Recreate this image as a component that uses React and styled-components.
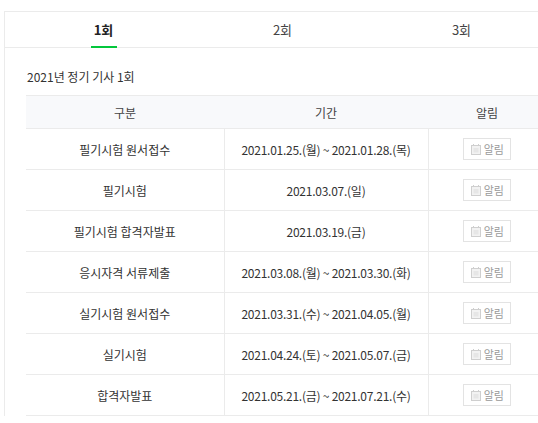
import React from "react";
import styled, { createGlobalStyle } from "styled-components";

const Global = createGlobalStyle`
  html, body { margin: 0; padding: 0; overflow: hidden; background: #fff; }
  body { font-family: "Noto Sans CJK KR", "Noto Sans", sans-serif; color: #333; }
`;

const Page = styled.div`
  width: 100%;
  overflow: hidden;
`;

const Panel = styled.div`
  margin: 11px 0 0 4px;
  width: 580px;
  border-top: 1px solid #ebebeb;
  border-left: 1px solid #ebebeb;
`;

const TabList = styled.ul`
  list-style: none;
  margin: 0;
  padding: 0 0 0 9px;
  display: flex;
  border-bottom: 1px solid #ebebeb;
`;

const Tab = styled.li`
  position: relative;
  width: 179px;
  height: 35px;
  display: flex;
  align-items: center;
  justify-content: center;
  font-size: 13px;
  font-weight: ${(p) => (p.$active ? 700 : 400)};
  color: ${(p) => (p.$active ? "#222" : "#444")};
`;

const Indicator = styled.span`
  position: absolute;
  left: 50%;
  bottom: -1px;
  width: 26px;
  height: 2px;
  margin-left: -13px;
  background: #03c73c;
`;

const Body = styled.div`
  padding: 20px 0 0 21px;
`;

const Title = styled.h3`
  margin: 0 0 9px 1px;
  font-size: 12px;
  font-weight: 400;
  line-height: 18px;
  color: #333;
`;

const Table = styled.table`
  border-collapse: collapse;
  table-layout: fixed;
  width: 520px;
  font-size: 12px;
`;

const Th = styled.th`
  height: 32px;
  padding: 0;
  background: #f8f9fb;
  border-top: 1px solid #ebebeb;
  border-bottom: 1px solid #ebebeb;
  font-weight: 400;
  color: #444;
  text-align: center;
`;

const Td = styled.td`
  height: 40px;
  padding: 0;
  border-bottom: 1px solid #ebebeb;
  border-left: ${(p) => (p.$first ? "none" : "1px solid #ebebeb")};
  text-align: center;
  color: #333;
  white-space: nowrap;
  letter-spacing: ${(p) => (p.$tight ? "-0.25px" : "0")};
`;

const AlarmButton = styled.button`
  display: inline-flex;
  align-items: center;
  justify-content: center;
  gap: 3px;
  width: 48px;
  height: 22px;
  padding: 0;
  border: 1px solid #e3e3e3;
  background: #fff;
  font-family: inherit;
  font-size: 11px;
  color: #9a9a9a;
  vertical-align: middle;
`;

const CalIcon = () => (
  <svg width="10" height="11" viewBox="0 0 10 11">
    <rect x="0.5" y="1.5" width="9" height="9" fill="#f2f2f2" stroke="#cfcfcf" />
    <rect x="2.5" y="4" width="5" height="4.5" fill="#e6e6e6" />
    <rect x="2" y="0" width="1" height="2" fill="#cfcfcf" />
    <rect x="7" y="0" width="1" height="2" fill="#cfcfcf" />
  </svg>
);

const rows = [
  ["필기시험 원서접수", "2021.01.25.(월) ~ 2021.01.28.(목)"],
  ["필기시험", "2021.03.07.(일)"],
  ["필기시험 합격자발표", "2021.03.19.(금)"],
  ["응시자격 서류제출", "2021.03.08.(월) ~ 2021.03.30.(화)"],
  ["실기시험 원서접수", "2021.03.31.(수) ~ 2021.04.05.(월)"],
  ["실기시험", "2021.04.24.(토) ~ 2021.05.07.(금)"],
  ["합격자발표", "2021.05.21.(금) ~ 2021.07.21.(수)"],
];

export default function App() {
  return (
    <>
      <Global />
      <Page>
        <Panel>
          <TabList>
            <Tab $active>
              1회
              <Indicator />
            </Tab>
            <Tab>2회</Tab>
            <Tab>3회</Tab>
          </TabList>
          <Body>
            <Title>2021년 정기 기사 1회</Title>
            <Table>
              <colgroup>
                <col style={{ width: 198 }} />
                <col style={{ width: 204 }} />
                <col style={{ width: 118 }} />
              </colgroup>
              <thead>
                <tr>
                  <Th>구분</Th>
                  <Th>기간</Th>
                  <Th>알림</Th>
                </tr>
              </thead>
              <tbody>
                {rows.map(([name, date]) => (
                  <tr key={name}>
                    <Td $first>{name}</Td>
                    <Td $tight>{date}</Td>
                    <Td>
                      <AlarmButton>
                        <CalIcon />
                        알림
                      </AlarmButton>
                    </Td>
                  </tr>
                ))}
              </tbody>
            </Table>
          </Body>
        </Panel>
      </Page>
    </>
  );
}
